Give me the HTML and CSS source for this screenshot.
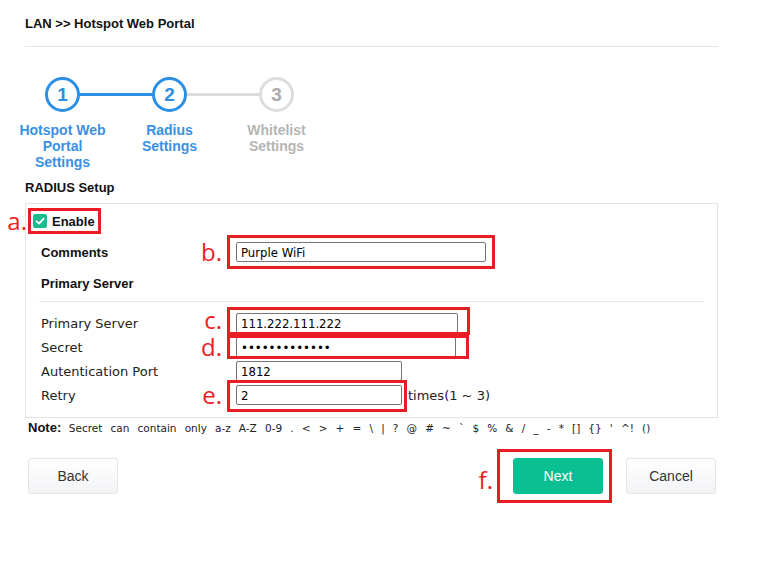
FILE: index.html
```html
<!DOCTYPE html>
<html lang="en">
<head>
<meta charset="UTF-8">
<meta name="viewport" content="width=device-width, initial-scale=1.0">
<link rel="stylesheet" href="styles.css">
<title>Hotspot Web Portal</title>
</head>
<body>

<div class="page">
    <div class="crumb">LAN &gt;&gt; Hotspot Web Portal</div>

    <div class="steps">
        <div class="step done">
            <div class="circle">1</div>
            <div class="step-label">Hotspot Web<br>Portal<br>Settings</div>
        </div>
        <div class="step active">
            <div class="circle">2</div>
            <div class="step-label">Radius<br>Settings</div>
        </div>
        <div class="step">
            <div class="circle">3</div>
            <div class="step-label">Whitelist<br>Settings</div>
        </div>
    </div>

    <div class="section-title">RADIUS Setup</div>

    <div class="panel">
        <label class="enable">
            <span class="ann">a.</span>
            <span class="check">
                <svg width="14" height="14" viewBox="0 0 14 14"><rect width="14" height="14" rx="2" fill="#1cbb8f"/><path d="M3.4 7.2 L6 9.6 L10.6 4.6" fill="none" stroke="#fff" stroke-width="1.8" stroke-linecap="round" stroke-linejoin="round"/></svg>
            </span>
            Enable
        </label>

        <div class="row first">
            <span class="label bold">Comments</span>
            <span class="mark mark-b"><span class="ann">b.</span><input type="text" class="w-250" value="Purple WiFi"></span>
        </div>

        <div class="row sub-head">
            <span class="label bold">Primary Server</span>
        </div>
        <div class="sep"></div>

        <div class="row">
            <span class="label">Primary Server</span>
            <span class="mark mark-c"><span class="ann">c.</span><input type="text" class="w-222" value="111.222.111.222"></span>
        </div>
        <div class="row">
            <span class="label">Secret</span>
            <span class="mark mark-d"><span class="ann">d.</span><input type="password" class="w-220" value="purplesecret1"></span>
        </div>
        <div class="row">
            <span class="label">Autentication Port</span>
            <span class="field"><input type="text" class="w-166" value="1812"></span>
        </div>
        <div class="row">
            <span class="label">Retry</span>
            <span class="mark mark-e"><span class="ann">e.</span><input type="text" class="w-166" value="2"></span>
            <span class="unit">times(1 ~ 3)</span>
        </div>
    </div>

    <div class="note">
        <b>Note:</b>
        <span class="note-text">Secret can contain only a-z A-Z 0-9 . &lt; &gt; + = \ | ? @ # ~ ` $ % &amp; / _ - * [] {} ' ^! ()</span>
    </div>

    <div class="buttons">
        <button type="button" class="btn">Back</button>
        <div class="right-buttons">
            <div class="next-mark">
                <span class="ann">f.</span>
                <button type="button" class="btn btn-next">Next</button>
            </div>
            <button type="button" class="btn">Cancel</button>
        </div>
    </div>
</div>

</body>
</html>
```

FILE: styles.css
```css
body {
    margin: 0;
    background-color: #FFFFFF;
    font-family: "Liberation Sans", Arial, sans-serif;
    color: #222;
}

.page {
    width: 693px;
    margin-left: 25px;
    padding-bottom: 60px;
}

.crumb {
    height: 46px;
    line-height: 48px;
    font-size: 13px;
    font-weight: bold;
    color: #111;
    border-bottom: 1px solid #e6e6e6;
}

/* stepper */
.steps {
    display: flex;
    margin-top: 30px;
    margin-left: -16px;
}

.step {
    width: 107px;
    position: relative;
    display: flex;
    flex-direction: column;
    align-items: center;
}

.step:not(:last-child)::after {
    content: '';
    position: absolute;
    top: 16px;
    left: 50%;
    width: 107px;
    height: 3px;
    background-color: #dddddd;
}

.step.done::after {
    background-color: #2b8fe3 !important;
}

.circle {
    position: relative;
    z-index: 1;
    width: 29px;
    height: 29px;
    line-height: 29px;
    border: 3px solid #dddddd;
    border-radius: 50%;
    background-color: #FFFFFF;
    text-align: center;
    font-size: 19px;
    font-weight: bold;
    color: #aaaaaa;
}

.step.done .circle,
.step.active .circle {
    border-color: #2b8fe3;
    color: #2b8fe3;
}

.step-label {
    margin-top: 10px;
    font-size: 14px;
    line-height: 16px;
    font-weight: bold;
    text-align: center;
    color: #b5b5b5;
}

.step.done .step-label,
.step.active .step-label {
    color: #3a90e4;
}

.section-title {
    margin-top: 10px;
    font-size: 13px;
    line-height: 16px;
    font-weight: bold;
    color: #111;
}

/* radius panel */
.panel {
    margin-top: 7px;
    border: 1px solid #e4e4e4;
    padding: 4px 13px 10px 13px;
}

.enable {
    position: relative;
    display: inline-flex;
    align-items: center;
    margin-left: -11px;
    height: 20px;
    padding: 0 3px 0 2px;
    border: 3px solid #ec1c24;
    font-size: 13px;
    font-weight: bold;
    color: #111;
}

.enable .ann {
    right: calc(100% + 4px);
}

.check {
    display: flex;
    margin-right: 5px;
}

.row {
    display: flex;
    align-items: center;
    height: 24px;
    padding-left: 2px;
    font-family: "DejaVu Sans", Verdana, sans-serif;
    font-size: 13px;
    color: #222;
}

.row.first {
    margin-top: 6px;
}

.sub-head {
    margin-top: 7px;
}

.label {
    width: 195px;
    flex-shrink: 0;
}

.label.bold {
    font-family: "Liberation Sans", Arial, sans-serif;
    font-weight: bold;
    color: #111;
}

.sep {
    height: 1px;
    margin: 6px 0 9px 0;
    background-color: #e6e6e6;
}

.field,
.mark {
    position: relative;
    display: inline-block;
}

.mark::after {
    content: '';
    position: absolute;
    border: 3px solid #ec1c24;
    pointer-events: none;
}

.mark-b::after { top: -7px; bottom: -7px; left: -9px; right: -9px; }
.mark-c::after { top: -6px; bottom: -2px; left: -9px; right: -12px; }
.mark-d::after { top: -2px; bottom: -2px; left: -9px; right: -13px; }
.mark-e::after { top: -5px; bottom: -7px; left: -9px; right: -5px; }

.ann {
    position: absolute;
    right: calc(100% + 14px);
    top: 50%;
    transform: translateY(-50%);
    font-family: "Open Sans", sans-serif;
    font-size: 24px;
    font-weight: normal;
    line-height: 20px;
    color: #ec1c24;
}

.mark-c .ann {
    top: calc(50% - 3px);
}

input[type="text"],
input[type="password"] {
    display: block;
    box-sizing: border-box;
    height: 20px;
    margin: 0;
    padding: 0 4px;
    border: 1px solid #767676;
    border-radius: 2px;
    background-color: #FFFFFF;
    font-family: "DejaVu Sans Condensed", "DejaVu Sans", sans-serif;
    font-size: 13px;
    color: #000;
}

.w-250 { width: 250px; }
.w-222 { width: 222px; }
.w-220 { width: 220px; }
.w-166 { width: 166px; }

.unit {
    margin-left: 6px;
}

.note {
    margin-top: 2px;
    padding-left: 3px;
    line-height: 16px;
    font-size: 13px;
    color: #111;
}

.note-text {
    margin-left: 4px;
    font-family: "DejaVu Sans", Verdana, sans-serif;
    font-size: 10.5px;
    word-spacing: 4.8px;
    color: #222;
}

/* buttons */
.buttons {
    display: flex;
    justify-content: space-between;
    align-items: center;
    margin-top: 13px;
    padding: 0 2px 0 3px;
}

.right-buttons {
    display: flex;
    align-items: center;
    gap: 14px;
}

.next-mark {
    position: relative;
    padding: 6px 6px 6px 13px;
    border: 3px solid #ec1c24;
}

.next-mark .ann {
    right: calc(100% + 7px);
    top: calc(50% + 4px);
}

.btn {
    display: block;
    width: 90px;
    height: 36px;
    border: 1px solid #e3e5e8;
    border-radius: 3px;
    background: linear-gradient(#ffffff, #f2f3f5);
    font-family: "Liberation Sans", Arial, sans-serif;
    font-size: 14px;
    color: #333;
    cursor: pointer;
}

.btn-next {
    border-color: #0abf92;
    background: #0abf92;
    color: #FFFFFF;
}
```
